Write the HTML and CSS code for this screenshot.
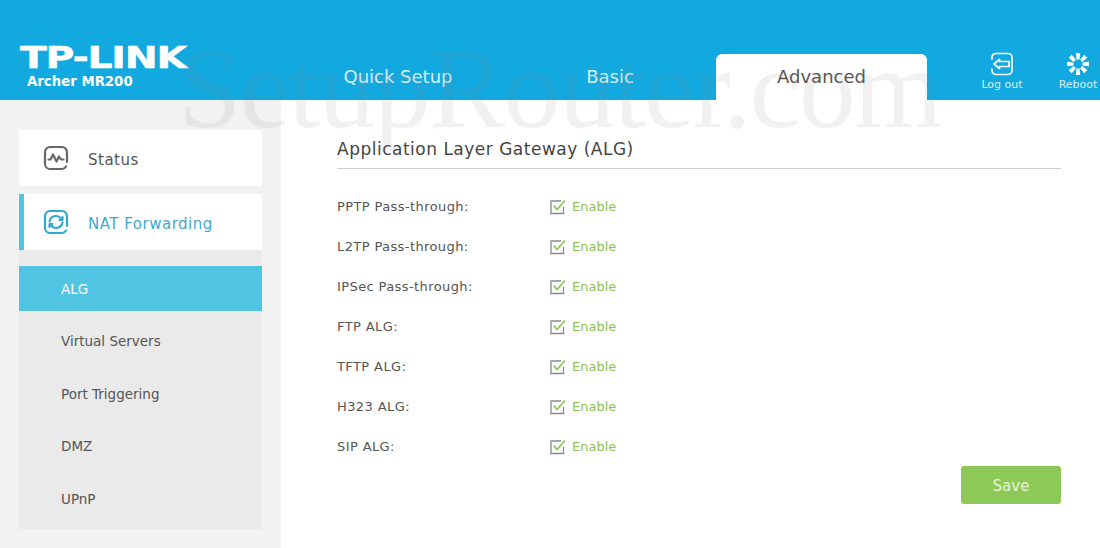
FILE: index.html
```html
<!DOCTYPE html>
<html>
    <head>
        <title>Archer MR200</title>
        <link rel="stylesheet" href="styles.css">
    </head>
    <body>
        <div class="header">
            <div class="brand">
                <div class="logo">TP-LINK</div>
                <div class="model">Archer MR200</div>
            </div>
            <div class="tabs">
                <div class="tab">Quick Setup</div>
                <div class="tab">Basic</div>
                <div class="tab tab-active">Advanced</div>
            </div>
            <div class="actions">
                <div class="action">
                    <svg width="24" height="24" viewBox="0 0 24 24" fill="none" stroke="#fff" stroke-width="1.700" stroke-linejoin="round" stroke-linecap="round">
                        <path d="M2 7V5.500A4 4 0 0 1 6 1.500H18A4 4 0 0 1 22 5.500V18.500A4 4 0 0 1 18 22.500H6A4 4 0 0 1 2 18.500V17"/>
                        <path d="M4 12L9.500 7.500V9.500H19V14.500H9.500V16.500Z"/>
                    </svg>
                    <span>Log out</span>
                </div>
                <div class="action">
                    <svg width="24" height="24" viewBox="0 0 24 24" fill="#fff">
                        <path d="M9.800 1H14.200L13.500 7.500H10.500Z"/>
                        <path d="M9.800 1H14.200L13.500 7.500H10.500Z" transform="rotate(45 12 12)"/>
                        <path d="M9.800 1H14.200L13.500 7.500H10.500Z" transform="rotate(90 12 12)"/>
                        <path d="M9.800 1H14.200L13.500 7.500H10.500Z" transform="rotate(135 12 12)"/>
                        <path d="M9.800 1H14.200L13.500 7.500H10.500Z" transform="rotate(180 12 12)"/>
                        <path d="M9.800 1H14.200L13.500 7.500H10.500Z" transform="rotate(225 12 12)"/>
                        <path d="M9.800 1H14.200L13.500 7.500H10.500Z" transform="rotate(270 12 12)"/>
                        <path d="M9.800 1H14.200L13.500 7.500H10.500Z" transform="rotate(315 12 12)"/>
                    </svg>
                    <span>Reboot</span>
                </div>
            </div>
        </div>

        <div class="main">
            <div class="sidebar">
                <div class="nav-card">
                    <svg class="nav-icon" width="26" height="26" viewBox="0 0 26 26" fill="none" stroke="#666" stroke-width="2.200" stroke-linecap="round" stroke-linejoin="round">
                        <path d="M24 17V7A5 5 0 0 0 19 2H7A5 5 0 0 0 2 7V19A5 5 0 0 0 7 24H19A5 5 0 0 0 23 21.500"/>
                        <path d="M5.500 14.500H7.500L10 9.500L13.500 16.500L16 11.500L18 14.500H20.500"/>
                    </svg>
                    <span>Status</span>
                </div>
                <div class="nav-card nav-card-active">
                    <svg class="nav-icon" width="26" height="26" viewBox="0 0 26 26" fill="none" stroke="#2fa9cf" stroke-width="2.200" stroke-linecap="round" stroke-linejoin="round">
                        <path d="M24 17V7A5 5 0 0 0 19 2H7A5 5 0 0 0 2 7V19A5 5 0 0 0 7 24H19A5 5 0 0 0 23 21.500"/>
                        <path d="M6.500 12.500A6.500 6.500 0 0 1 18 9.500M19.500 13.500A6.500 6.500 0 0 1 8 16.500"/>
                        <path d="M19.500 8V11H16.500M6.500 18V15H9.500"/>
                    </svg>
                    <span>NAT Forwarding</span>
                </div>
                <div class="submenu">
                    <div class="sub-item sub-item-active">ALG</div>
                    <div class="sub-item">Virtual Servers</div>
                    <div class="sub-item">Port Triggering</div>
                    <div class="sub-item">DMZ</div>
                    <div class="sub-item">UPnP</div>
                </div>
            </div>

            <div class="content">
                <h2 class="title">Application Layer Gateway (ALG)</h2>
                <div class="rows">
                    <div class="row"><label>PPTP Pass-through:</label><span class="check"><svg width="16" height="16" viewBox="0 0 16 16" fill="none"><path d="M13.500 8V14.500H1V2H11" stroke="#8a8a8a" stroke-width="1.300"/><path d="M3.800 6.500L7 10.500L15 1.500" stroke="#8cc34f" stroke-width="1.600"/></svg>Enable</span></div>
                    <div class="row"><label>L2TP Pass-through:</label><span class="check"><svg width="16" height="16" viewBox="0 0 16 16" fill="none"><path d="M13.500 8V14.500H1V2H11" stroke="#8a8a8a" stroke-width="1.300"/><path d="M3.800 6.500L7 10.500L15 1.500" stroke="#8cc34f" stroke-width="1.600"/></svg>Enable</span></div>
                    <div class="row"><label>IPSec Pass-through:</label><span class="check"><svg width="16" height="16" viewBox="0 0 16 16" fill="none"><path d="M13.500 8V14.500H1V2H11" stroke="#8a8a8a" stroke-width="1.300"/><path d="M3.800 6.500L7 10.500L15 1.500" stroke="#8cc34f" stroke-width="1.600"/></svg>Enable</span></div>
                    <div class="row"><label>FTP ALG:</label><span class="check"><svg width="16" height="16" viewBox="0 0 16 16" fill="none"><path d="M13.500 8V14.500H1V2H11" stroke="#8a8a8a" stroke-width="1.300"/><path d="M3.800 6.500L7 10.500L15 1.500" stroke="#8cc34f" stroke-width="1.600"/></svg>Enable</span></div>
                    <div class="row"><label>TFTP ALG:</label><span class="check"><svg width="16" height="16" viewBox="0 0 16 16" fill="none"><path d="M13.500 8V14.500H1V2H11" stroke="#8a8a8a" stroke-width="1.300"/><path d="M3.800 6.500L7 10.500L15 1.500" stroke="#8cc34f" stroke-width="1.600"/></svg>Enable</span></div>
                    <div class="row"><label>H323 ALG:</label><span class="check"><svg width="16" height="16" viewBox="0 0 16 16" fill="none"><path d="M13.500 8V14.500H1V2H11" stroke="#8a8a8a" stroke-width="1.300"/><path d="M3.800 6.500L7 10.500L15 1.500" stroke="#8cc34f" stroke-width="1.600"/></svg>Enable</span></div>
                    <div class="row"><label>SIP ALG:</label><span class="check"><svg width="16" height="16" viewBox="0 0 16 16" fill="none"><path d="M13.500 8V14.500H1V2H11" stroke="#8a8a8a" stroke-width="1.300"/><path d="M3.800 6.500L7 10.500L15 1.500" stroke="#8cc34f" stroke-width="1.600"/></svg>Enable</span></div>
                </div>
                <div class="buttons">
                    <div class="save">Save</div>
                </div>
            </div>
        </div>

        <div class="watermark">SetupRouter.com</div>
    </body>
</html>
```

FILE: styles.css
```css
html, body{
    margin: 0;
    height: 548px;
    overflow: hidden;
}

body{
    font-family: "DejaVu Sans", sans-serif;
    color: #555;
    background-color: #fff;
    position: relative;
    width: 1100px;
}

.header{
    height: 100px;
    background-color: #12a9e0;
    display: flex;
    align-items: flex-end;
}

.brand{
    width: 292px;
    flex-shrink: 0;
    align-self: stretch;
    padding: 44px 0 0 20px;
    box-sizing: border-box;
    color: #fff;
}

.logo{
    font-size: 31px;
    line-height: 26px;
    font-weight: bold;
    letter-spacing: -1px;
    -webkit-text-stroke: 0.500px #fff;
    transform: scaleX(1.270);
    transform-origin: left center;
}

.model{
    font-size: 13.300px;
    line-height: 16px;
    font-weight: bold;
    margin: 4px 0 0 7px;
}

.tabs{
    display: flex;
    flex-shrink: 0;
}

.tab{
    width: 212px;
    height: 46px;
    line-height: 46px;
    text-align: center;
    font-size: 18px;
    color: #d6f0fa;
}

.tab-active{
    width: 211px;
    background-color: #fff;
    color: #555;
    border-radius: 6px 6px 0 0;
}

.actions{
    display: flex;
    flex-shrink: 0;
    align-self: stretch;
    margin-left: 37px;
}

.action{
    width: 76px;
    flex-shrink: 0;
    padding-top: 52px;
    display: flex;
    flex-direction: column;
    align-items: center;
    color: #d6f0fa;
    font-size: 11px;
    line-height: 13px;
    gap: 2px;
}

.main{
    display: flex;
    height: 448px;
}

.sidebar{
    width: 281px;
    box-sizing: border-box;
    background-color: #f2f2f2;
    padding: 30px 19px 0;
}

.nav-card{
    width: 243px;
    height: 56px;
    margin-bottom: 8px;
    box-sizing: border-box;
    background-color: #fff;
    display: flex;
    align-items: center;
    padding-left: 24px;
    font-size: 15px;
    letter-spacing: 0.500px;
    color: #555;
}

.nav-card span{
    padding-top: 3px;
}

.nav-icon{
    margin-right: 19px;
}

.nav-card-active{
    border-left: 5px solid #4fc3e2;
    padding-left: 19px;
    color: #3fa9cf;
    margin-bottom: 0;
}

.submenu{
    width: 243px;
    height: 279px;
    background-color: #eaeaea;
    padding-top: 16px;
    box-sizing: border-box;
}

.sub-item{
    height: 45px;
    line-height: 47px;
    margin-bottom: 7.400px;
    padding-left: 42px;
    font-size: 13.500px;
    color: #555;
}

.sub-item-active{
    background-color: #52c4e3;
    color: #fff;
}

.content{
    width: 724px;
    margin-left: 56px;
    padding-top: 37px;
}

.title{
    margin: 0;
    height: 31px;
    font-size: 17px;
    line-height: 25px;
    letter-spacing: 0.500px;
    font-weight: normal;
    color: #444;
    border-bottom: 1px solid #ccc;
}

.rows{
    padding-top: 18px;
}

.row{
    height: 40px;
    display: flex;
    align-items: center;
    font-size: 13px;
}

.row label{
    width: 213px;
    letter-spacing: 0.400px;
    padding-bottom: 1px;
}

.check{
    display: flex;
    align-items: center;
    gap: 6px;
    color: #8cc34f;
    padding-bottom: 1px;
}

.buttons{
    display: flex;
    justify-content: flex-end;
    margin-top: -1px;
}

.save{
    width: 100px;
    height: 38px;
    line-height: 40px;
    text-align: center;
    font-size: 15px;
    color: #e8f5d8;
    background-color: #8cc957;
    border-radius: 3px;
}

/* watermark over the whole page */
.watermark{
    position: absolute;
    left: 178px;
    top: 24px;
    font-family: "Liberation Serif", serif;
    font-size: 114px;
    line-height: 130px;
    letter-spacing: -1.700px;
    color: rgba(130, 130, 130, 0.11);
    white-space: nowrap;
    pointer-events: none;
}
```
